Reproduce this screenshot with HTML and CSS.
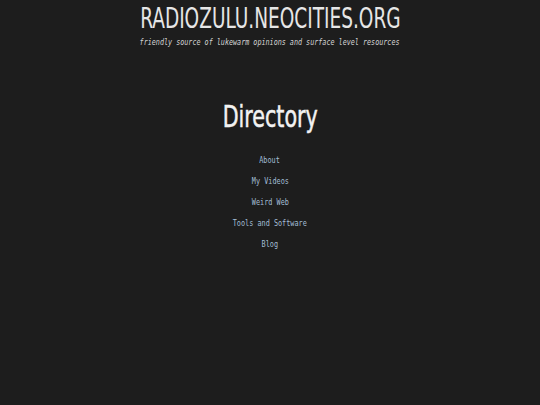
FILE: index.html
```html
<!DOCTYPE html>
<html>
<head>
<meta charset="utf-8">
<link rel="stylesheet" href="styles.css">
</head>
<body>
<header class="header">
  <h1 class="site-title">RADIOZULU.NEOCITIES.ORG</h1>
  <p class="tagline">friendly source of lukewarm opinions and surface level resources</p>
</header>
<main class="directory">
  <h2 class="dir-title">Directory</h2>
  <nav class="links">
    <a href="#">About</a>
    <a href="#">My Videos</a>
    <a href="#">Weird Web</a>
    <a href="#">Tools and Software</a>
    <a href="#">Blog</a>
  </nav>
</main>
</body>
</html>
```
FILE: styles.css
```css
html, body {
  margin: 0;
  padding: 0;
  background: #1d1d1d;
  height: 100%;
}
body {
  color: #e8e8e8;
  display: flex;
  flex-direction: column;
  align-items: center;
}
.header {
  display: flex;
  flex-direction: column;
  align-items: center;
  padding-top: 3px;
}
.site-title {
  margin: 0;
  font-family: "DejaVu Sans Condensed", sans-serif;
  font-weight: normal;
  font-size: 29px;
  line-height: 30px;
  color: #e6e6e6;
  white-space: nowrap;
  transform: scaleX(0.71);
}
.tagline {
  margin: 4px 0 0;
  font-family: "DejaVu Sans Mono", monospace;
  font-style: italic;
  font-size: 8.6px;
  line-height: 10px;
  color: #d4d4d4;
  white-space: nowrap;
  transform: scaleX(0.785);
}
.directory {
  display: flex;
  flex-direction: column;
  align-items: center;
  margin-top: 51px;
}
.dir-title {
  margin: 0;
  font-family: "DejaVu Sans Condensed", sans-serif;
  font-weight: normal;
  font-size: 31px;
  line-height: 36px;
  color: #f2f2f2;
  -webkit-text-stroke: 0.5px #f2f2f2;
  transform: scaleX(0.74);
}
.links {
  display: flex;
  flex-direction: column;
  align-items: center;
  gap: 10px;
  margin-top: 21px;
}
.links a {
  display: inline-block;
  font-family: "DejaVu Sans Mono", monospace;
  font-size: 9px;
  line-height: 11px;
  color: #a3bdd6;
  text-decoration: none;
  white-space: nowrap;
  transform: scaleX(0.76);
}
```
